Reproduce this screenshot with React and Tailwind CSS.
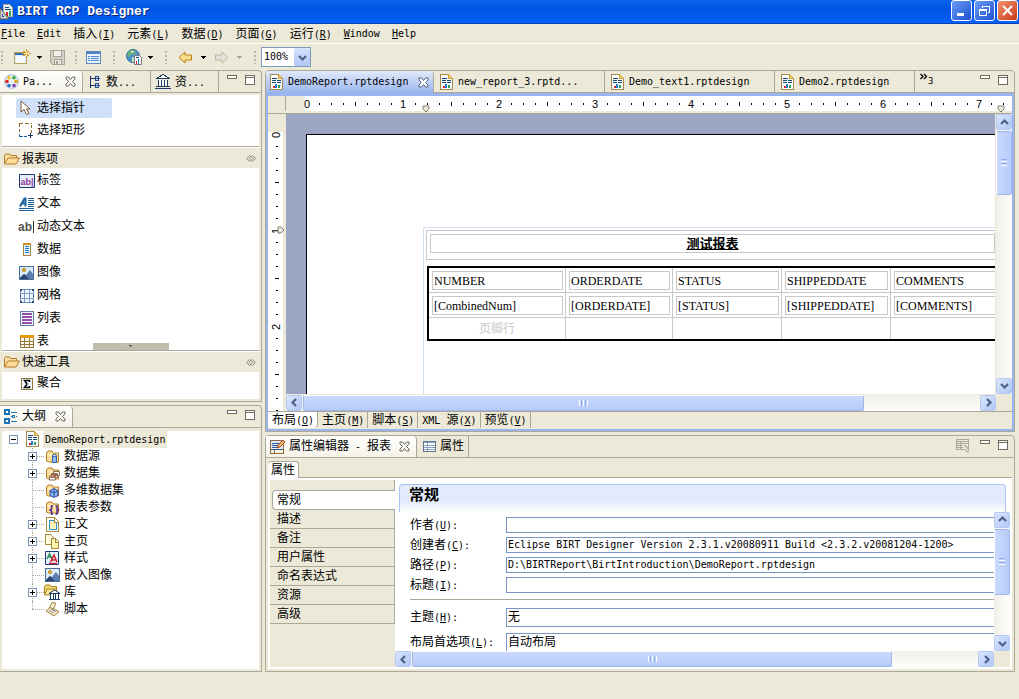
import React, { useState } from 'react'

/* ---------- Text helpers ---------- */

// latin runs are set smaller so that they take half the width of a CJK glyph
const Txt = ({ children }) =>
  children.split(/([\x20-\x7e]+)/).map((part, i) =>
    /^[\x20-\x7e]+$/.test(part) ? (
      <span key={i} className="text-[10px] whitespace-pre">{part}</span>
    ) : (
      part
    )
  )

const Mnemonic = ({ text, letter, suffix = '' }) => (
  <span className="whitespace-nowrap">
    <Txt>{text}</Txt>
    <span className="text-[10px]">
      (<u>{letter}</u>){suffix}
    </span>
  </span>
)

/* ---------- Icons ---------- */

const Svg = ({ w = 16, h = 16, children, smooth = false, className = '' }) => (
  <svg
    width={w}
    height={h}
    viewBox={`0 0 ${w} ${h}`}
    fill="none"
    shapeRendering={smooth ? 'auto' : 'crispEdges'}
    className={`shrink-0 ${className}`}
    aria-hidden="true"
  >
    {children}
  </svg>
)

const ReportIcon = () => (
  <Svg w={13} h={16}>
    <path d="M.5 .5h8l4 4v11H.5z" fill="#fbfdff" stroke="#a68a4c" />
    <path d="M8.500 .5v4h4z" fill="#f5d67c" stroke="#d0a030" />
    <path d="M2 4.500h5M2 6.500h4M7 6.500h4M2 8.500h4M7 8.500h4" stroke="#17456f" />
    <rect x="3" y="12" width="2" height="2" fill="#d8232f" />
    <rect x="5" y="10" width="2" height="4" fill="#1e7fd0" />
    <rect x="8" y="11" width="2" height="3" fill="#2aa35a" />
  </Svg>
)

const AppIcon = () => (
  <Svg w={13} h={17}>
    <path d="M3.500 1.500h6l3 3v9h-9z" fill="#e9f3ff" stroke="#b7ae8c" />
    <path d="M5 4.500h4M5 6.500h6" stroke="#17456f" />
    <rect x="6" y="9" width="2" height="4" fill="#d8232f" />
    <rect x="9" y="8" width="2" height="5" fill="#2a9f5a" />
    <path d="M0 5l9 11H0z" fill="#d7d3c6" stroke="#5d5a50" shapeRendering="auto" />
    <path d="M1.500 10l3 4h-3z" fill="#0a50d8" />
  </Svg>
)

const NewIcon = () => (
  <Svg w={17} h={16}>
    <path d="M.5 3.500h12v11H.5z" fill="#d9edfb" stroke="#b8a056" />
    <path d="M1 4.500h9M1 5.500h9" stroke="#3a6fae" />
    <path d="M2 7h9v7H2z" fill="#f2fafe" />
    <path d="M12 0v9M7.500 4.500h9M9.500 2l5 5M14.500 2l-5 5" stroke="#c8962a" />
    <path d="M12 2v5M9.500 4.500h5" stroke="#fff2a0" />
  </Svg>
)

const SaveIcon = () => (
  <Svg w={15} h={15}>
    <path d="M.5 .5h14v14h-12l-2-2z" fill="#d3d0c6" stroke="#a7a498" />
    <path d="M3.500 .5h8v6h-8z" fill="#f0efe8" stroke="#a7a498" />
    <path d="M4.500 9.500h7v5h-7z" fill="#e8e6de" stroke="#a7a498" />
    <path d="M6 11h2v3H6z" fill="#a7a498" />
  </Svg>
)

const FormIcon = () => (
  <Svg w={15} h={13}>
    <path d="M.5 .5h14v12H.5z" fill="#eaf4fe" stroke="#5f86bd" />
    <path d="M1 1h13v2H1z" fill="#4f83c9" />
    <path d="M2 5.500h2M5 5.500h8M2 7.500h2M5 7.500h8M2 9.500h2M5 9.500h8" stroke="#4d86cf" />
  </Svg>
)

const GlobeIcon = () => (
  <Svg w={16} h={16} smooth>
    <circle cx="7" cy="7" r="6.500" fill="#4c93cc" stroke="#356a97" />
    <path d="M3 2c3-2 6-1 7 1L8 6 5 5 4 8 1 7c0-2 1-4 2-5z" fill="#67b17a" />
    <path d="M6 8l3 1-1 4H6z" fill="#cfe4b4" />
    <path d="M5 2l3 0-2 2z" fill="#fff" />
    <path d="M8.500 6.500h5l2 2v7h-7z" fill="#fff" stroke="#7a7a8a" />
    <path d="M10 12h1v3h-1z" fill="#d8232f" />
    <path d="M12 10h1v5h-1z" fill="#1e7fd0" />
    <path d="M10 8.500h3" stroke="#17456f" />
  </Svg>
)

const ArrowIcon = ({ flip = false, muted = false }) => (
  <Svg w={15} h={13} smooth className={flip ? '-scale-x-100' : ''}>
    <path
      d="M1 6.500L7 1v3h6.500v5H7v3z"
      fill={muted ? '#e6e4da' : '#fbe08c'}
      stroke={muted ? '#bab7aa' : '#b87f14'}
    />
  </Svg>
)

const Caret = ({ muted = false }) => (
  <Svg w={5} h={3}>
    <path d="M0 0h5v1H0zM1 1h3v1H1zM2 2h1v1H2z" fill={muted ? '#aca899' : '#000'} />
  </Svg>
)

const PaletteIcon = () => (
  <Svg w={15} h={15} smooth>
    <circle cx="7.500" cy="7.500" r="6.800" fill="#e9f1fa" stroke="#9fb7d4" />
    <circle cx="5" cy="3.700" r="1.800" fill="#f0c020" />
    <circle cx="10" cy="3.700" r="1.800" fill="#3fa53f" />
    <circle cx="12" cy="7.500" r="1.800" fill="#e0a010" />
    <circle cx="3" cy="7.500" r="1.800" fill="#e02020" />
    <circle cx="5" cy="11.500" r="1.800" fill="#3070d0" />
    <circle cx="10" cy="11.500" r="1.800" fill="#8040b0" />
  </Svg>
)

const DataTreeIcon = () => (
  <Svg w={10} h={14}>
    <path d="M.5 1v12M1 3.500h4M1 10.500h4" stroke="#1a2f5c" />
    <path d="M5.500 1.500h3v4h-3zM5.500 8.500h3v4h-3z" fill="#cfe0f6" stroke="#27488c" />
    <path d="M5 3.500h5M5 10.500h5" stroke="#27488c" />
  </Svg>
)

const BankIcon = () => (
  <Svg w={16} h={15}>
    <path d="M1 4.500h14M2 4l6-3.500L14 4" fill="#fff" stroke="#1d3a63" />
    <path d="M3 6h10v6H3z" fill="#fff" />
    <path d="M3.500 6v6M6.500 6v6M9.500 6v6M12.500 6v6" stroke="#1d3a63" />
    <path d="M1 12.500h14M0 14.500h16" stroke="#1d3a63" />
  </Svg>
)

const CloseIcon = ({ light = false }) => (
  <Svg w={11} h={11} smooth>
    <path
      d="M1 1h2.500l2 2.500L7.500 1H10v2L7.500 5.500 10 8v2H7.500l-2-2.500L3.500 10H1V8l2.500-2.500L1 3z"
      fill={light ? '#fff' : '#f8f7f2'}
      stroke={light ? '#56627c' : '#6e6b60'}
    />
  </Svg>
)

const MinimizeIcon = () => (
  <Svg w={10} h={4}>
    <path d="M.5 .5h9v3h-9z" fill="#fff" stroke="#6e6b60" />
  </Svg>
)

const MaximizeIcon = () => (
  <Svg w={10} h={10}>
    <path d="M.5 .5h9v9h-9z" fill="#fff" stroke="#6e6b60" />
    <path d="M1 2.500h8" stroke="#6e6b60" />
  </Svg>
)

const PointerIcon = () => (
  <Svg w={11} h={16} smooth>
    <path d="M1 1v11l3-2.500 2.500 5L9 13.500 6.500 9H10z" fill="#fff" stroke="#7d5a3c" />
  </Svg>
)

const MarqueeIcon = () => (
  <Svg w={15} h={15}>
    <path d="M0 .5h4M6 .5h4M12 .5h1M.5 1v3M.5 6v3M12.500 2v3M12.500 7v3" stroke="#8c7222" />
    <path d="M.5 11v2M0 13.500h4M5 13.500h3" stroke="#1565a5" />
    <path d="M9 12.500h5M11.500 10v5" stroke="#17356c" />
  </Svg>
)

const FolderIcon = () => (
  <Svg w={16} h={12} smooth>
    <path d="M.5 10.500v-8l1-1.500h4l1 1.500h6v2.500" fill="#f8dfa4" stroke="#b57a24" />
    <path d="M.5 11L4 5h11.500L12 11z" fill="#fcdc98" stroke="#b57a24" />
  </Svg>
)

const PinIcon = () => (
  <Svg w={10} h={7} smooth>
    <path d="M3.500 .5l-3 3 3 3M6.500 .5l3 3-3 3M4 .5l3 3-3 3M6 .5l-3 3 3 3" stroke="#8d8a80" />
  </Svg>
)

const LabelIcon = () => (
  <Svg w={16} h={14} smooth>
    <path d="M.5 .5h15v13H.5z" fill="#e8effb" stroke="#1d3a78" />
    <text x="1.500" y="10.500" fontSize="9" fontWeight="bold" fontFamily="Liberation Sans, sans-serif" fill="#8c3a9c">ab|</text>
  </Svg>
)

const TextIcon = () => (
  <Svg w={16} h={14} smooth>
    <path d="M1 9.500L5.500 1.500h1V9.500M3 6.500h4" stroke="#1f5f9c" strokeWidth="2" />
    <path d="M9 1.500h6M9 3.500h6M9 5.500h6M9 7.500h6M9 9.500h6M0 11.500h15M0 13.500h15" stroke="#1f5f9c" shapeRendering="crispEdges" />
  </Svg>
)

const DynamicTextIcon = () => (
  <Svg w={17} h={15} smooth>
    <text x="0" y="12" fontSize="12" fontWeight="bold" fontFamily="Liberation Sans, sans-serif" fill="#555">ab</text>
    <path d="M15.500 2v12" stroke="#333" />
  </Svg>
)

const DataIcon = () => (
  <Svg w={16} h={13}>
    <path d="M4.500 .5h7v12h-7z" fill="#e4f3fd" stroke="#a8823c" />
    <path d="M4 1h8" stroke="#d98a20" strokeWidth="2" />
    <path d="M6 3.500h4M6 5.500h4M6 7.500h4M6 9.500h4" stroke="#2181c8" />
  </Svg>
)

const ImageIcon = () => (
  <Svg w={15} h={14}>
    <path d="M.5 .5h14v13H.5z" fill="#dcecfb" stroke="#4a6b98" />
    <circle cx="5" cy="4" r="1.500" fill="#f8d030" stroke="#b87818" shapeRendering="auto" />
    <path d="M1 13v-1l4-4 2 1 4-5 3 4v5z" fill="#5a7fb0" shapeRendering="auto" />
    <path d="M1 12l4-4 5 5H1z" fill="#2a4570" shapeRendering="auto" />
  </Svg>
)

const GridIcon = () => (
  <Svg w={14} h={14}>
    <path d="M.5 .5h13v13H.5z" fill="#edf4fc" stroke="#6f8fb4" />
    <path d="M4.500 1v12M9.500 1v12M1 4.500h12M1 9.500h12" stroke="#7f9fc2" />
    <path d="M0 0h2v2H0zM12 0h2v2h-2zM0 12h2v2H0zM12 12h2v2h-2zM0 6h1v2H0zM13 6h1v2h-1z" fill="#2f4a78" />
  </Svg>
)

const ListIcon = () => (
  <Svg w={14} h={15}>
    <path d="M.5 .5h13v14H.5z" fill="#f2f6fc" stroke="#5f7fa8" />
    <path d="M2 3h10M2 6h10M2 9h10M2 12h10" stroke="#9250a8" strokeWidth="2" />
  </Svg>
)

const TableIcon = () => (
  <Svg w={14} h={13}>
    <path d="M.5 .5h13v12H.5z" fill="#fdfaf0" stroke="#94783c" />
    <path d="M0 0h14v3H0z" fill="#e8960c" />
    <path d="M4.500 3v10M9.500 3v10M1 6.500h12M1 9.500h12" stroke="#94783c" />
  </Svg>
)

const SigmaIcon = () => (
  <Svg w={12} h={12}>
    <path d="M.5 .5h11v11H.5z" fill="#eef6fd" stroke="#94783c" />
    <path d="M8.500 4V2.500H3.500L6 6 3.500 9.500h5V8" stroke="#000" strokeWidth="1.500" shapeRendering="auto" />
  </Svg>
)

const OutlineIcon = () => (
  <Svg w={14} h={15}>
    <path d="M1 1h4v4H1zM1 10h4v4H1z" fill="#fff" stroke="#1d74b8" strokeWidth="2" />
    <path d="M7 3.500h6M7 12.500h6M7 7.500h1M12 7.500h1" stroke="#1d74b8" />
    <path d="M8.500 6.500h2v2h-2z" fill="#fff" stroke="#1d74b8" />
  </Svg>
)

const BadgeFolder = ({ children }) => (
  <Svg w={15} h={15} smooth>
    <path d="M1.500 12V4L3 2h4l1 2h5.500v9h-10z" fill="#fbdc9a" stroke="#b57a24" />
    <path d="M2 6h11" stroke="#fff4d4" />
    {children}
  </Svg>
)

const DataSourceIcon = () => (
  <BadgeFolder>
    <path d="M7.500 6.500h4v7h-4z" fill="#8fbcf0" stroke="#2f62a8" />
    <ellipse cx="9.500" cy="6.500" rx="2" ry="1" fill="#e4f1ff" stroke="#2f62a8" />
  </BadgeFolder>
)

const DataSetIcon = () => (
  <BadgeFolder>
    <path d="M8.500 5.500h6v4h-6zM6.500 7.500h6v4h-6zM4.500 10h6v4h-6z" fill="#f4f8fc" stroke="#8a6f58" />
    <path d="M5 11h5M7 8.500h5" stroke="#c85830" />
  </BadgeFolder>
)

const CubeIcon = () => (
  <BadgeFolder>
    <path d="M9 5.500l4 2v5l-4 2-4-2v-5z" fill="#8ab4f0" stroke="#2a4fa0" />
    <path d="M9 6v8M5 8l4 2 4-2" stroke="#2a4fa0" />
  </BadgeFolder>
)

const ParameterIcon = () => (
  <BadgeFolder>
    <path d="M8 6H6.500v3L5 10l1.500 1v3H8M10.500 6H12v3l1.500 1-1.500 1v3h-1.500" stroke="#4a2a90" strokeWidth="1.500" />
  </BadgeFolder>
)

const BodyIcon = () => (
  <Svg w={13} h={15}>
    <path d="M.5 .5h8l4 4v10H.5z" fill="#fff" stroke="#a68a3c" />
    <path d="M3.500 3.500h4l3 3v6h-7z" fill="#fdf3b8" stroke="#2a94cc" />
    <path d="M8 1v4h4" stroke="#a68a3c" />
  </Svg>
)

const MasterPageIcon = () => (
  <Svg w={15} h={15}>
    <path d="M.5 .5h5l3 3v7h-8z" fill="#fffbe0" stroke="#a68a3c" />
    <path d="M6.500 4.500h4l3 3v7h-7z" fill="#fdf3b0" stroke="#a68a3c" />
    <path d="M10.500 5v3h3" stroke="#a68a3c" />
  </Svg>
)

const StyleIcon = () => (
  <Svg w={14} h={14} smooth>
    <path d="M.5 .5h13v13H.5z" fill="#e8f2fc" stroke="#1d3a78" />
    <path d="M2 8l2.500-5.500L7 8M3 6h3" stroke="#2a8a4a" strokeWidth="1.300" />
    <path d="M5.500 11L9 4l3 7M7 9h4M4 12.500h8" stroke="#d0202c" strokeWidth="1.500" />
  </Svg>
)

const LibraryIcon = () => (
  <Svg w={16} h={16} smooth>
    <path d="M.5 11V2.500L2 1h4l1 1.500h5.500V5" fill="#f4d878" stroke="#a88420" />
    <path d="M.5 11L3 5h10l-2 6z" fill="#f8e498" stroke="#a88420" />
    <path d="M5 9.500L10.500 6 16 9.500z" fill="#fff" stroke="#1d3a63" />
    <path d="M6 10h9v5H6z" fill="#fff" />
    <path d="M6.500 10v5M9.500 10v5M11.500 10v5M14.500 10v5M5 15.500h11" stroke="#1d3a63" />
  </Svg>
)

const ScriptIcon = () => (
  <Svg w={15} h={16} smooth>
    <path d="M4.500 6.500L7 1.500 10.500 2 9.500 6l-2 3.500z" fill="#fbf2d4" stroke="#a08040" />
    <path d="M1 10l4-3.500 9 4-5 4.500z" fill="#f6e8c0" stroke="#a08040" />
    <path d="M4 9.500l5 2.500M6 8l5 2.500" stroke="#8090a8" />
  </Svg>
)

const PropertyEditIcon = () => (
  <Svg w={16} h={15}>
    <path d="M.5 1.500h13v13H.5z" fill="#f6f2e0" stroke="#8f6a3a" />
    <path d="M1 2h12v7H1z" fill="#dcebfb" />
    <path d="M2 4.500h8M2 6.500h6M2 8.500h5M1 10.500h12" stroke="#2a5a94" />
    <path d="M4.500 11v3" stroke="#8f6a3a" />
    <path d="M7 9l1-3 5-5 2 2-5 5z" fill="#f0b860" stroke="#a04830" shapeRendering="auto" />
  </Svg>
)

const PropertyTableIcon = () => (
  <Svg w={13} h={11}>
    <path d="M.5 .5h12v10H.5z" fill="#fff" stroke="#5f7290" />
    <path d="M1 1h11v1H1z" fill="#8aa4cc" />
    <path d="M4.500 2v8M1 4.500h11M1 6.500h11M1 8.500h11" stroke="#8aa0bc" />
  </Svg>
)

const RestoreTableIcon = () => (
  <Svg w={14} h={14}>
    <path d="M.5 .5h12v10H.5zM1 2.500h11M1 4.500h11M1 6.500h7M1 8.500h7M4.500 2v8" stroke="#aca899" />
    <path d="M7 6h3l3 3v4h-3l-3-3z" fill="#ece9d8" />
    <path d="M8 7h2l3 4M12 8v2M9 10l2 3h2" stroke="#98948a" shapeRendering="auto" />
  </Svg>
)

/* ---------- Title bar, menu, toolbar ---------- */

const captionButton =
  'w-[21px] h-[21px] rounded-[3px] border border-white flex items-center justify-center'

const TitleBar = () => (
  <header className="flex shrink-0 h-6 items-center bg-linear-to-b from-[#0a63ea] via-[#0054e3] via-40% to-[#0562fa] border-b border-[#0a3fb4] pr-px">
    <AppIcon />
    <h1 className="ml-1 flex-1 text-[13px] font-bold text-white font-['Liberation_Mono',monospace] [text-shadow:1px_1px_0_#0a2a80]">
      BIRT RCP Designer
    </h1>
    <div className="flex gap-0.5 self-start">
      <button aria-label="Minimize" className={`${captionButton} bg-linear-to-br from-[#6d9bf5] to-[#1d4fd0]`}>
        <Svg w={13} h={13}><path d="M2 9h7v3H2z" fill="#fff" /></Svg>
      </button>
      <button aria-label="Restore" className={`${captionButton} bg-linear-to-br from-[#6d9bf5] to-[#1d4fd0]`}>
        <Svg w={13} h={13}>
          <path d="M4.500 4V2.500h7v6H10M4 2h8" stroke="#fff" />
          <path d="M1.500 5.500h7v6h-7zM1 6.500h8" stroke="#fff" />
        </Svg>
      </button>
      <button aria-label="Close window" className={`${captionButton} bg-linear-to-br from-[#f0906c] to-[#cc3510]`}>
        <Svg w={13} h={13} smooth><path d="M2 2l9 9M11 2l-9 9" stroke="#fff" strokeWidth="2" /></Svg>
      </button>
    </div>
  </header>
)

const menus = [
  { text: '插入', letter: 'I' },
  { text: '元素', letter: 'L' },
  { text: '数据', letter: 'D' },
  { text: '页面', letter: 'G' },
  { text: '运行', letter: 'R' },
]

const MenuBar = () => (
  <nav className="flex shrink-0 h-5 items-center gap-3 pl-px border-b border-white">
    <button className="text-[10px]"><u>F</u>ile</button>
    <button className="text-[10px]"><u>E</u>dit</button>
    {menus.map((menu) => (
      <button key={menu.letter}><Mnemonic {...menu} /></button>
    ))}
    <button className="text-[10px]"><u>W</u>indow</button>
    <button className="text-[10px]"><u>H</u>elp</button>
  </nav>
)

const Grip = () => (
  <Svg w={3} h={14}>
    <path d="M0 1h2v2H0zM0 5h2v2H0zM0 9h2v2H0zM0 13h2v1H0z" fill="#bab6a6" />
  </Svg>
)

const Toolbar = () => {
  const [zoom, setZoom] = useState('100%')

  return (
    <div className="flex shrink-0 h-[26px] items-center pl-px">
      <Grip />
      <div className="flex items-center gap-1.5 ml-2.5 mr-2.5">
        <button aria-label="New"><NewIcon /></button>
        <button aria-label="New menu"><Caret /></button>
        <button aria-label="Save" className="ml-0.5"><SaveIcon /></button>
      </div>
      <Grip />
      <button aria-label="Report form" className="ml-2 mr-3"><FormIcon /></button>
      <Grip />
      <div className="flex items-center gap-1.5 ml-2.5 mr-3">
        <button aria-label="View report"><GlobeIcon /></button>
        <button aria-label="View report menu"><Caret /></button>
      </div>
      <Grip />
      <div className="flex items-center gap-2 ml-2.5 mr-3">
        <button aria-label="Back"><ArrowIcon /></button>
        <button aria-label="Back menu"><Caret /></button>
        <button aria-label="Forward"><ArrowIcon flip muted /></button>
        <button aria-label="Forward menu"><Caret muted /></button>
      </div>
      <Grip />
      <div className="relative ml-1">
        <select
          aria-label="Zoom"
          value={zoom}
          onChange={(e) => setZoom(e.target.value)}
          className="block appearance-none w-[50px] h-5 border border-[#7f9db9] bg-white pl-0.5 text-[10px]"
        >
          <option>50%</option>
          <option>100%</option>
          <option>200%</option>
        </select>
        <span className="absolute right-px top-px w-4 h-[18px] rounded-xs bg-linear-to-b from-[#d5e2fd] to-[#aec5f5] flex items-center justify-center pointer-events-none">
          <Chevron dir="down" />
        </span>
      </div>
    </div>
  )
}

/* ---------- Scrollbars ---------- */

const chevrons = {
  up: 'M1 6l3.500-3.500L8 6',
  down: 'M1 3l3.500 3.500L8 3',
  left: 'M6 1L2.500 4.500 6 8',
  right: 'M3 1l3.500 3.500L3 8',
}

const Chevron = ({ dir }) => (
  <Svg w={9} h={9} smooth>
    <path d={chevrons[dir]} stroke="#4d6185" strokeWidth="2.200" />
  </Svg>
)

const ScrollButton = ({ dir }) => (
  <button
    aria-label={`Scroll ${dir}`}
    className="w-4 h-4 shrink-0 rounded-xs border border-white outline-1 -outline-offset-1 outline-[#b4c8f2] bg-linear-to-br from-[#dbe6fe] to-[#b0c7f8] flex items-center justify-center"
  >
    <Chevron dir={dir} />
  </button>
)

// size is the share of the track that the thumb covers
const VScroll = ({ size }) => (
  <div className="w-4 shrink-0 flex flex-col bg-linear-to-r from-[#f0efe8] to-[#fefefb]">
    <ScrollButton dir="up" />
    <div className="flex-1 min-h-0 py-px">
      <div
        className="w-full rounded-xs border border-[#9db5ea] border-l-white bg-linear-to-r from-[#cbdafd] to-[#b6cbfa] flex flex-col items-center justify-center gap-px"
        style={{ height: `${size}%` }}
      >
        <i className="w-1.5 h-px bg-[#8fb0f0]" />
        <i className="w-1.5 h-px bg-white" />
        <i className="w-1.5 h-px bg-[#8fb0f0]" />
        <i className="w-1.5 h-px bg-white" />
      </div>
    </div>
    <ScrollButton dir="down" />
  </div>
)

const HScroll = ({ size }) => (
  <div className="h-4 flex-1 min-w-0 flex bg-linear-to-b from-[#f0efe8] to-[#fefefb]">
    <ScrollButton dir="left" />
    <div className="flex-1 min-w-0 px-px">
      <div
        className="h-full rounded-xs border border-[#9db5ea] border-t-white bg-linear-to-b from-[#cbdafd] to-[#b6cbfa] flex items-center justify-center gap-px"
        style={{ width: `${size}%` }}
      >
        <i className="h-1.5 w-px bg-white" />
        <i className="h-1.5 w-px bg-[#8fb0f0]" />
        <i className="h-1.5 w-px bg-white" />
        <i className="h-1.5 w-px bg-[#8fb0f0]" />
        <i className="h-1.5 w-px bg-white" />
      </div>
    </div>
    <ScrollButton dir="right" />
  </div>
)

const ViewButtons = () => (
  <div className="ml-auto flex items-start gap-2 pt-1 pr-1.5">
    <button aria-label="Minimize view"><MinimizeIcon /></button>
    <button aria-label="Maximize view"><MaximizeIcon /></button>
  </div>
)

/* ---------- Palette ---------- */

const paletteItems = [
  { icon: LabelIcon, text: '标签' },
  { icon: TextIcon, text: '文本' },
  { icon: DynamicTextIcon, text: '动态文本' },
  { icon: DataIcon, text: '数据' },
  { icon: ImageIcon, text: '图像' },
  { icon: GridIcon, text: '网格' },
  { icon: ListIcon, text: '列表' },
  { icon: TableIcon, text: '表' },
]

const PaletteItem = ({ icon: Icon, text }) => (
  <button className="flex h-[23px] w-full items-center pl-4">
    <span className="flex w-[17px] justify-center pt-0.5"><Icon /></span>
    <span className="ml-0.5">{text}</span>
  </button>
)

const DrawerHeader = ({ text }) => (
  <div className="flex shrink-0 h-[22px] items-center border-t border-[#aca899] bg-[#ece9d8] shadow-[inset_0_1px_0_#fff] pt-0.5 pl-0.5 pr-[3px]">
    <FolderIcon />
    <span className="ml-0.5">{text}</span>
    <button aria-label="Pin drawer" className="ml-auto"><PinIcon /></button>
  </div>
)

const sideTab = 'flex items-center h-full border-r border-[#aca899]'

const PaletteView = () => (
  <section className="flex flex-col min-h-0 flex-[332] rounded-tr-sm border-t border-r border-b border-[#aca899]">
    <div className="flex shrink-0 h-[22px] border-b border-[#aca899]">
      <button className={`${sideTab} w-[83px] pl-1 bg-linear-to-b from-white to-[#f4f2e8] rounded-tr-sm`}>
        <PaletteIcon />
        <span className="ml-1 text-[10px]">Pa...</span>
        <span className="ml-auto mr-1.5"><CloseIcon /></span>
      </button>
      <button className={`${sideTab} w-[68px] pl-[7px]`}>
        <DataTreeIcon />
        <span className="ml-1.5"><Txt>数...</Txt></span>
      </button>
      <button className={`${sideTab} w-[68px] pl-1`}>
        <BankIcon />
        <span className="ml-1"><Txt>资...</Txt></span>
      </button>
      <ViewButtons />
    </div>
    <div className="flex flex-col flex-1 min-h-0 m-0.5 bg-white">
      <div className="shrink-0 pt-[3px] pb-[5px]">
        <button className="flex items-center h-5 w-24 ml-3.5 pl-1 rounded-xs bg-[#cfe0f8]">
          <PointerIcon />
          <span className="ml-1.5">选择指针</span>
        </button>
        <PaletteItem icon={MarqueeIcon} text="选择矩形" />
      </div>
      <DrawerHeader text="报表项" />
      <div className="relative flex-1 min-h-0 overflow-hidden">
        {paletteItems.map((item) => (
          <PaletteItem key={item.text} {...item} />
        ))}
        <button
          aria-label="Scroll palette down"
          className="absolute bottom-0 inset-x-0 mx-auto w-[76px] h-[7px] flex items-center justify-center bg-[#c0bdae]"
        >
          <Svg w={7} h={4} smooth><path d="M.5 .5h6l-3 3z" fill="#5f5c52" stroke="#eceade" strokeWidth=".5" /></Svg>
        </button>
      </div>
      <DrawerHeader text="快速工具" />
      <div className="shrink-0 pb-1">
        <PaletteItem icon={SigmaIcon} text="聚合" />
      </div>
    </div>
  </section>
)

/* ---------- Outline ---------- */

const outlineNodes = [
  { icon: DataSourceIcon, text: '数据源', expandable: true },
  { icon: DataSetIcon, text: '数据集', expandable: true },
  { icon: CubeIcon, text: '多维数据集' },
  { icon: ParameterIcon, text: '报表参数' },
  { icon: BodyIcon, text: '正文', expandable: true },
  { icon: MasterPageIcon, text: '主页', expandable: true },
  { icon: StyleIcon, text: '样式', expandable: true },
  { icon: ImageIcon, text: '嵌入图像' },
  { icon: LibraryIcon, text: '库', expandable: true },
  { icon: ScriptIcon, text: '脚本' },
]

const Twisty = ({ open = false }) => (
  <Svg w={9} h={9}>
    <path d="M.5 .5h8v8h-8z" fill="#fff" stroke="#7b94b8" />
    <path d={open ? 'M2 4.500h5' : 'M2 4.500h5M4.500 2v5'} stroke="#000" />
  </Svg>
)

const OutlineView = () => (
  <section className="flex flex-col min-h-0 flex-[267] rounded-tr-sm border-t border-r border-b border-[#aca899]">
    <div className="flex shrink-0 h-[22px] border-b border-[#aca899]">
      <button className={`${sideTab} w-[73px] pl-1 bg-linear-to-b from-white to-[#f4f2e8] rounded-tr-sm`}>
        <OutlineIcon />
        <span className="ml-1">大纲</span>
        <span className="ml-auto mr-1.5"><CloseIcon /></span>
      </button>
      <ViewButtons />
    </div>
    <div className="flex-1 min-h-0 m-0.5 mt-[3px] bg-white overflow-hidden">
      <div className="flex items-center h-[17px] pl-[7px]">
        <button aria-label="Collapse"><Twisty open /></button>
        <span className="ml-2"><ReportIcon /></span>
        <span className="ml-1 px-0.5 h-full leading-[17px] bg-[#ece9d8] text-[10px]">DemoReport.rptdesign</span>
      </div>
      <ul className="pl-[26px]">
        {outlineNodes.map(({ icon: Icon, text, expandable }, index) => (
          <li key={text} className="flex items-center h-[17px]">
            <span className="relative flex items-center w-4 h-full">
              <i
                className={`absolute left-1 top-0 border-l border-dotted border-[#aca899] ${
                  index === outlineNodes.length - 1 ? 'h-1/2' : 'h-full'
                }`}
              />
              <i className="absolute left-1 right-0 top-1/2 border-t border-dotted border-[#aca899]" />
              {expandable && (
                <button aria-label={`Expand ${text}`} className="relative"><Twisty /></button>
              )}
            </span>
            <span className="flex w-4 justify-center"><Icon /></span>
            <span className="ml-1">{text}</span>
          </li>
        ))}
      </ul>
    </div>
  </section>
)

/* ---------- Report editor ---------- */

const INCH = 96

const tickMarks = (inches, draw) =>
  inches.flatMap((inch) =>
    [1, 2, 3, 4, 5, 6, 7].map((n) => draw(inch * INCH + n * 12, n === 4 ? 4 : 2, `${inch}-${n}`))
  )

const HRuler = () => {
  const inches = [0, 1, 2, 3, 4, 5, 6, 7]

  return (
    <svg width="100%" height="17" shapeRendering="crispEdges" className="block">
      {inches.map((n) => (
        <text key={n} x={3 + n * INCH} y="12" textAnchor="middle" fontSize="11" fontFamily="Liberation Sans, sans-serif">{n}</text>
      ))}
      {tickMarks(inches, (pos, len, key) => (
        <rect key={key} x={3 + pos} y={8 - len / 2} width="1" height={len} />
      ))}
      {[122, 697].map((x) => (
        <path key={x} d={`M${x - 3} 10h6v3l-3 3-3-3z`} fill="#ece9d8" stroke="#84817a" shapeRendering="auto" />
      ))}
    </svg>
  )
}

const VRuler = () => {
  const inches = [0, 1, 2]

  return (
    <svg width="18" height="100%" shapeRendering="crispEdges" className="block">
      {inches.map((n) => (
        <text
          key={n}
          textAnchor="middle"
          fontSize="11"
          fontFamily="Liberation Sans, sans-serif"
          transform={`translate(12 ${3 + n * INCH}) rotate(-90)`}
        >
          {n}
        </text>
      ))}
      {tickMarks(inches, (pos, len, key) => (
        <rect key={key} x={9 - len / 2} y={2 + pos} width={len} height="1" />
      ))}
      <path d="M10 95h3l3 3-3 3h-3z" fill="#ece9d8" stroke="#84817a" shapeRendering="auto" />
    </svg>
  )
}

const columns = ['NUMBER', 'ORDERDATE', 'STATUS', 'SHIPPEDDATE', 'COMMENTS']
const bindings = ['[CombinedNum]', '[ORDERDATE]', '[STATUS]', '[SHIPPEDDATE]', '[COMMENTS]']

const cell = 'border-r border-b border-[#c8c8c8] last:border-r-0 pt-[3px] pl-[3px] pb-0.5 pr-0.5 text-left font-normal'
const cellBox = 'h-[19px] border border-[#c8c8c8] px-px leading-[18px] whitespace-nowrap'

const ReportCanvas = () => (
  <div className="flex-1 min-w-0 overflow-hidden bg-[#9ca5c3] border-r border-[#ece9d8] pt-5 pl-5">
    <div className="h-full w-[816px] border-t border-l border-black bg-white pt-[92px] pl-[116px]">
      <div className="h-full w-[580px] border border-b-0 border-[#cfdff0] pt-0.5 pl-0.5 font-['Liberation_Serif','Noto_Sans_CJK_SC',serif]">
        <div className="w-[574px] h-[30px] border border-[#c8c8c8] pt-[3px] pl-[3px] pr-1">
          <div className="h-[19px] border border-[#c8c8c8] text-center text-[13px] leading-[18px] font-bold underline">
            测试报表
          </div>
        </div>
        <div className="w-[575px] mt-1.5 ml-px border-2 border-black">
          <table className="w-full table-fixed border-separate border-spacing-0">
            <colgroup>
              <col className="w-[137px]" />
              <col className="w-[107px]" />
              <col className="w-[109px]" />
              <col className="w-[109px]" />
              <col />
            </colgroup>
            <thead>
              <tr>
                {columns.map((name) => (
                  <th key={name} className={cell}><div className={cellBox}>{name}</div></th>
                ))}
              </tr>
            </thead>
            <tbody>
              <tr>
                {bindings.map((name) => (
                  <td key={name} className={cell}><div className={cellBox}>{name}</div></td>
                ))}
              </tr>
            </tbody>
            <tfoot>
              <tr>
                {columns.map((name, index) => (
                  <td key={name} className="h-[21px] border-r border-[#c8c8c8] last:border-r-0 text-center leading-5 text-[#c8c8c8]">
                    {index === 0 && '页脚行'}
                  </td>
                ))}
              </tr>
            </tfoot>
          </table>
        </div>
      </div>
    </div>
  </div>
)

const pages = [
  { text: '布局', letter: 'O' },
  { text: '主页', letter: 'M' },
  { text: '脚本', letter: 'S' },
  { text: 'XML 源', letter: 'X' },
  { text: '预览', letter: 'V' },
]

const fileTab = 'flex items-center h-full pl-1.5 border-r border-b border-[#aca899] bg-[#ece9d8] text-[10px]'

const EditorView = () => (
  <section className="flex flex-col min-h-0 flex-[362] rounded-t-sm border border-[#aca899] overflow-hidden">
    <div className="flex shrink-0 h-[22px]">
      <button className="flex items-center h-full w-[168px] pl-1 border-r border-[#aca899] rounded-tr-sm bg-linear-to-b from-[#e2eafb] to-[#99b4ef] text-[10px]">
        <ReportIcon />
        <span className="ml-[5px]">DemoReport.rptdesign</span>
        <span className="ml-auto mr-1"><CloseIcon light /></span>
      </button>
      <button className={`${fileTab} w-[171px]`}>
        <ReportIcon /><span className="ml-[5px]">new_report_3.rptd...</span>
      </button>
      <button className={`${fileTab} w-[170px]`}>
        <ReportIcon /><span className="ml-[5px]">Demo_text1.rptdesign</span>
      </button>
      <button className={`${fileTab} w-[140px]`}>
        <ReportIcon /><span className="ml-[5px]">Demo2.rptdesign</span>
      </button>
      <div className="flex flex-1 items-start border-b border-[#aca899] pl-[5px]">
        <button aria-label="Show more editors" className="flex pt-0.5 text-[10px]">
          <Svg w={8} h={8} smooth><path d="M.5 1L3 3.500.5 6M4 1l2.500 2.500L4 6" stroke="#000" strokeWidth="1.300" /></Svg>
          <span className="text-[9px] leading-4">3</span>
        </button>
        <ViewButtons />
      </div>
    </div>

    <div className="flex flex-col flex-1 min-h-0 border-2 border-t-[3px] border-[#99b4ef] bg-[#ece9d8]">
      <div className="flex shrink-0 h-[18px] border-b border-[#aca899]">
        <div className="w-[18px] mb-0.5 border-r border-[#aca899]" />
        <div className="w-[18px]" />
        <div className="flex-1 min-w-0 overflow-hidden bg-linear-to-b from-white from-88% to-[#ece9d8] to-88%">
          <HRuler />
        </div>
      </div>
      <div className="flex flex-1 min-h-0">
        <div className="w-[18px] shrink-0 pt-[18px] overflow-hidden">
          <div className="h-full bg-linear-to-r from-white from-83% to-[#ece9d8] to-83%">
            <VRuler />
          </div>
        </div>
        <div className="flex flex-col flex-1 min-w-0">
          <div className="flex flex-1 min-h-0">
            <ReportCanvas />
            <VScroll size={26} />
          </div>
          <div className="flex shrink-0 mt-px">
            <HScroll size={83} />
            <div className="w-4" />
          </div>
        </div>
      </div>
      <div className="flex shrink-0 h-[18px] border-t border-[#aca899]">
        {pages.map((page, index) => (
          <button
            key={page.letter}
            className={`flex items-center h-4 pl-1 pr-[3px] border-r border-[#aca899] ${
              index === 0 ? 'bg-white rounded-b-sm' : ''
            }`}
          >
            <Mnemonic {...page} />
          </button>
        ))}
      </div>
    </div>
  </section>
)

/* ---------- Property editor ---------- */

const categories = ['常规', '描述', '备注', '用户属性', '命名表达式', '资源', '高级']

const fields = [
  { id: 'author', text: '作者', letter: 'U', value: '' },
  {
    id: 'creator',
    text: '创建者',
    letter: 'C',
    value: 'Eclipse BIRT Designer Version 2.3.1.v20080911 Build <2.3.2.v20081204-1200>',
  },
  { id: 'path', text: '路径', letter: 'P', value: 'D:\\BIRTReport\\BirtIntroduction\\DemoReport.rptdesign' },
  { id: 'title', text: '标题', letter: 'I', value: '' },
]

const fieldBorder = 'flex-1 min-w-0 border border-r-0 border-[#7a96c8] bg-white'

const PropertiesView = () => {
  const [category, setCategory] = useState('常规')

  return (
    <section className="flex flex-col min-h-0 flex-[237] rounded-t-sm border border-[#aca899]">
      <div className="flex shrink-0 h-[22px] border-b border-[#aca899]">
        <button className={`${sideTab} w-[151px] pl-1 bg-linear-to-b from-white to-[#f4f2e8] rounded-tr-sm`}>
          <PropertyEditIcon />
          <span className="ml-[3px]"><Txt>属性编辑器 - 报表</Txt></span>
          <span className="ml-auto mr-1.5"><CloseIcon /></span>
        </button>
        <button className={`${sideTab} w-[52px] pl-1.5`}>
          <PropertyTableIcon />
          <span className="ml-1">属性</span>
        </button>
        <div className="flex ml-auto">
          <button aria-label="Restore defaults" className="self-center mr-2.5"><RestoreTableIcon /></button>
          <ViewButtons />
        </div>
      </div>

      <div className="flex shrink-0 h-5 items-end mx-0.5">
        <button className="h-[17px] px-[3px] flex items-center bg-white border-r border-t border-[#aca899] rounded-t-sm">属性</button>
        <div className="flex-1 border-b border-[#aca899]" />
      </div>

      <div className="flex flex-1 min-h-0 mx-0.5 mb-0.5 p-0.5 bg-white">
        <div className="w-[125px] shrink-0 bg-[#ece9d8]">
          <div className="h-2.5 border-r border-[#aca899]" />
          {categories.map((name) => (
            <button
              key={name}
              onClick={() => setCategory(name)}
              className={`block text-left border-b border-[#aca899] ${
                category === name
                  ? 'h-5 pl-1 ml-0.5 w-[123px] border-t border-l rounded-l-sm bg-white leading-4'
                  : 'h-[19px] w-full pl-[7px] border-r leading-4'
              }`}
            >
              {name}
            </button>
          ))}
        </div>

        <div className="flex flex-col flex-1 min-w-0">
          <h2 className="shrink-0 mt-1 ml-1 mr-1 h-7 pl-[9px] border border-b-0 border-[#a9c6f5] rounded-t-sm bg-linear-to-b from-[#e3eafb] from-60% to-white text-[15px] leading-[21px] font-bold">
            常规
          </h2>
          <div className="flex flex-1 min-h-0">
            <form className="flex-1 min-w-0 overflow-hidden pt-[5px] pl-[15px]" onSubmit={(e) => e.preventDefault()}>
              {fields.map((field) => (
                <div key={field.id} className="flex items-center h-4 mb-1">
                  <label htmlFor={field.id} className="w-24 shrink-0"><Mnemonic text={field.text} letter={field.letter} suffix=":" /></label>
                  <input id={field.id} defaultValue={field.value} className={`${fieldBorder} h-4 pl-px text-[10px]`} />
                </div>
              ))}
              <hr className="mt-1.5 border-[#aca899]" />
              <div className="flex items-center h-[19px] mt-2">
                <label htmlFor="theme" className="w-24 shrink-0"><Mnemonic text="主题" letter="H" suffix=":" /></label>
                <select id="theme" className={`${fieldBorder} appearance-none h-[19px] pl-px pb-1`}>
                  <option>无</option>
                </select>
              </div>
              <div className="flex items-center h-[19px] mt-1.5">
                <label htmlFor="layout" className="w-24 shrink-0"><Mnemonic text="布局首选项" letter="L" suffix=":" /></label>
                <select id="layout" className={`${fieldBorder} appearance-none h-[19px] pl-px pb-1`}>
                  <option>自动布局</option>
                </select>
              </div>
            </form>
            <VScroll size={63} />
          </div>
          <div className="flex shrink-0">
            <HScroll size={85} />
            <div className="w-4 bg-[#ece9d8]" />
          </div>
        </div>
      </div>
    </section>
  )
}

/* ---------- Main Component ---------- */

const App = () => (
  <div className="flex flex-col h-screen overflow-hidden bg-[#ece9d8] text-xs text-black font-['DejaVu_Sans_Mono','Noto_Sans_CJK_SC',monospace]">
    <TitleBar />
    <MenuBar />
    <Toolbar />
    <main className="flex flex-1 min-h-0 gap-[3px] pr-1">
      <div className="flex flex-col w-[262px] shrink-0 gap-[3px]">
        <PaletteView />
        <OutlineView />
      </div>
      <div className="flex flex-col flex-1 min-w-0 gap-[3px]">
        <EditorView />
        <PropertiesView />
      </div>
    </main>
    <footer className="h-[27px] shrink-0" />
  </div>
)

export default App
